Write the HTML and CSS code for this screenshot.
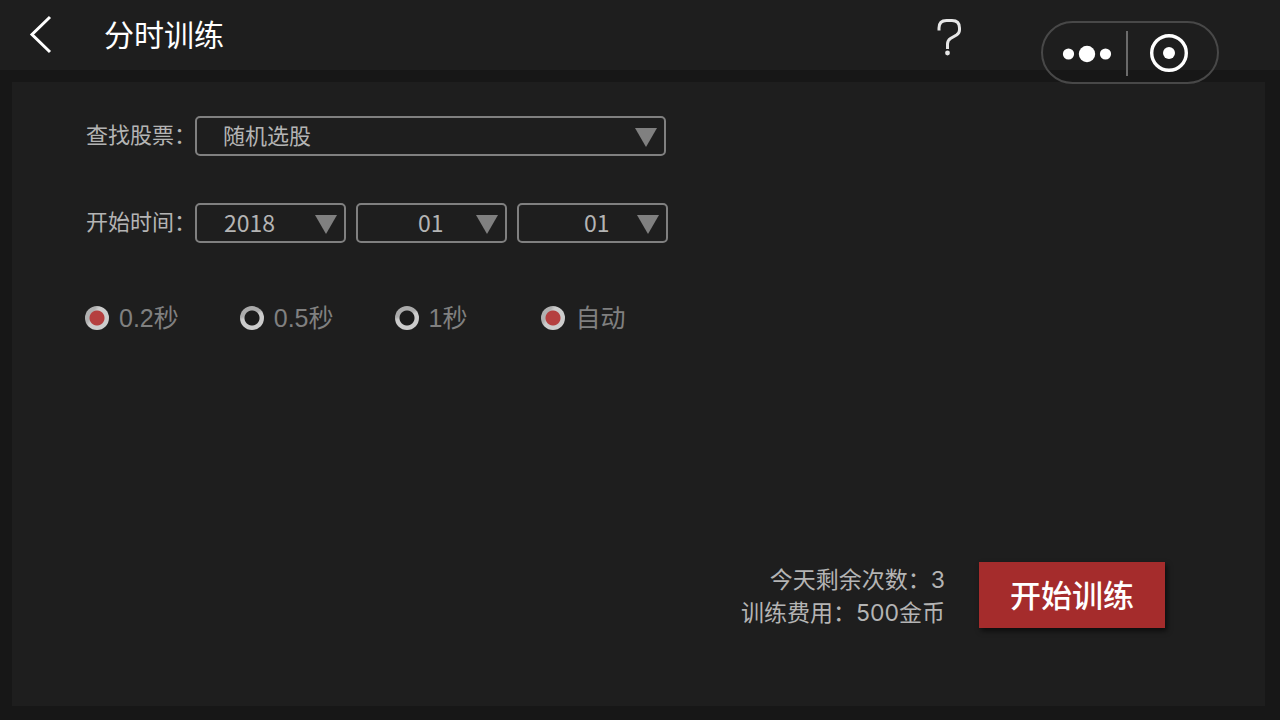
FILE: index.html
```html
<!DOCTYPE html>
<html lang="zh-CN">
<head>
<meta charset="utf-8">
<meta name="viewport" content="width=device-width, initial-scale=1">
<title>分时训练</title>
<link rel="stylesheet" href="styles.css">
</head>
<body>
<header class="topbar">
  <button class="icon-btn" type="button" aria-label="返回">
    <svg width="24" height="40" viewBox="0 0 24 40" fill="none" stroke="#fff" stroke-width="3"><path d="M22 2 4 19.500l18 17.500"/></svg>
  </button>
  <h1 class="title">分时训练</h1>
  <button class="icon-btn help" type="button" aria-label="帮助">
    <svg width="26" height="38" viewBox="0 0 26 38" fill="none" stroke="#e6e6e6" stroke-width="3"><path d="M2 12.500V10Q2 2.500 9.500 2.500H15Q22.500 2.500 22.500 10V12Q22.500 15 19.500 17L13.500 20.500Q10.500 22.500 10.500 26V31"/><circle cx="10.500" cy="35" r="2.400" fill="#e6e6e6" stroke="none"/></svg>
  </button>
</header>
<div class="capsule">
  <button class="capsule-btn" type="button" aria-label="更多">
    <svg width="50" height="40" viewBox="0 0 50 40" fill="#fff"><circle cx="6.500" cy="21" r="5.600"/><circle cx="25" cy="21" r="8.200"/><circle cx="43.500" cy="21" r="5.600"/></svg>
  </button>
  <span class="capsule-line"></span>
  <button class="capsule-btn" type="button" aria-label="关闭">
    <svg width="40" height="40" viewBox="0 0 40 40"><circle cx="20" cy="20" r="17.300" fill="none" stroke="#fff" stroke-width="3.400"/><circle cx="20" cy="20" r="6" fill="#fff"/></svg>
  </button>
</div>
<main class="panel">
  <form class="form">
    <div class="row">
      <label class="label" for="stock">查找股票：</label>
      <span class="picker picker-wide"><select id="stock"><option>随机选股</option></select></span>
    </div>
    <div class="row">
      <label class="label" for="year">开始时间：</label>
      <div class="dates">
        <span class="picker"><select id="year"><option>2018</option></select></span>
        <span class="picker picker-month"><select aria-label="月"><option>01</option></select></span>
        <span class="picker picker-day"><select aria-label="日"><option>01</option></select></span>
      </div>
    </div>
    <div class="speeds">
      <label class="choice"><input type="radio" name="speed" checked>0.2秒</label>
      <label class="choice"><input type="radio" name="speed">0.5秒</label>
      <label class="choice"><input type="radio" name="speed">1秒</label>
      <label class="choice"><input type="checkbox" checked>自动</label>
    </div>
    <div class="footer">
      <div class="info">
        <p>今天剩余次数：3</p>
        <p>训练费用：500金币</p>
      </div>
      <button class="start" type="button">开始训练</button>
    </div>
  </form>
</main>
</body>
</html>
```
FILE: styles.css
```css
* {
  box-sizing: border-box;
}

body {
  margin: 0;
  min-height: 100vh;
  display: flex;
  flex-direction: column;
  position: relative;
  background: #171717;
  color: #b4b4b4;
  font-family: "Liberation Sans", "Noto Sans CJK SC", sans-serif;
}

button {
  padding: 0;
  border: 0;
  background: none;
  color: inherit;
  font: inherit;
  cursor: pointer;
}

svg {
  display: block;
}

.topbar {
  height: 70px;
  display: flex;
  align-items: center;
  padding: 0 317px 0 28px;
  background: #1e1e1e;
}

.title {
  margin: 0 auto 0 52px;
  padding-bottom: 4px;
  color: #fff;
  font-family: "Noto Sans CJK SC", sans-serif;
  font-size: 30px;
  font-weight: 400;
  line-height: 66px;
}

.help {
  padding-top: 4px;
}

.capsule {
  position: absolute;
  top: 21px;
  right: 61px;
  width: 178px;
  height: 63px;
  display: flex;
  align-items: center;
  padding: 1px 0 0 19px;
  border: 2px solid #484848;
  border-radius: 32px;
}

.capsule-line {
  width: 2px;
  height: 45px;
  margin: 0 21px 0 14px;
  background: #6b6b6b;
}

.panel {
  flex: 1;
  display: flex;
  margin: 12px 15px 14px 12px;
  background: #1e1e1e;
}

.form {
  flex: 1;
  display: flex;
  flex-direction: column;
  padding: 34px 100px 76px 73px;
}

.row {
  display: grid;
  grid-template-columns: 109px auto;
  justify-content: start;
  align-items: center;
  margin: 0 0 47px 1px;
}

.label {
  padding-bottom: 6px;
  font-family: "Noto Sans CJK SC", sans-serif;
  font-size: 22px;
  line-height: 34px;
  white-space: nowrap;
}

.dates {
  display: flex;
  gap: 10px;
}

.picker {
  position: relative;
  width: 151px;
}

.picker-wide {
  width: 471px;
}

.picker::after {
  content: "";
  position: absolute;
  top: 12px;
  right: 9px;
  width: 22px;
  height: 19px;
  background: #808080;
  clip-path: polygon(0 0, 100% 0, 50% 100%);
  pointer-events: none;
}

.picker select {
  display: block;
  width: 100%;
  height: 40px;
  padding: 0 0 7px 27px;
  appearance: none;
  border: 2px solid #808080;
  border-radius: 5px;
  background: transparent;
  color: #b4b4b4;
  font-family: "Noto Sans CJK SC", sans-serif;
  font-size: 23px;
}

.picker-wide select {
  padding-left: 26px;
  font-size: 22px;
}

.picker-month select {
  padding-left: 60px;
}

.picker-day select {
  padding-left: 65px;
}

.speeds {
  display: flex;
  gap: 61px;
  margin-top: 10px;
}

.choice {
  display: flex;
  align-items: center;
  gap: 10px;
  color: #808080;
  font-size: 25px;
  line-height: 36px;
}

.choice:last-child {
  margin-left: 13px;
}

.choice input {
  appearance: none;
  width: 24px;
  height: 24px;
  margin: 0;
  border-radius: 50%;
  background:
    radial-gradient(circle, #1b1b1b 7px, transparent 8px),
    linear-gradient(160deg, #aaa 35%, #ccc 45%);
}

.choice input:checked {
  background:
    radial-gradient(circle, #b53f3f 7px, transparent 8px),
    linear-gradient(120deg, #b0b0b0 30%, #ccc 40%);
}

.footer {
  display: flex;
  justify-content: flex-end;
  align-items: center;
  gap: 34px;
  margin-top: auto;
}

.info {
  padding-top: 4px;
  font-family: Inter, "Noto Sans CJK SC", sans-serif;
  font-size: 23px;
  line-height: 33px;
  text-align: right;
}

.info p {
  margin: 0;
}

.start {
  width: 186px;
  height: 66px;
  padding-bottom: 2px;
  background: #a52c2c;
  box-shadow: 2px 3px 5px #0009;
  color: #fff;
  font-family: "Noto Sans CJK SC", sans-serif;
  font-size: 31px;
  font-weight: 500;
  line-height: 64px;
}
```
